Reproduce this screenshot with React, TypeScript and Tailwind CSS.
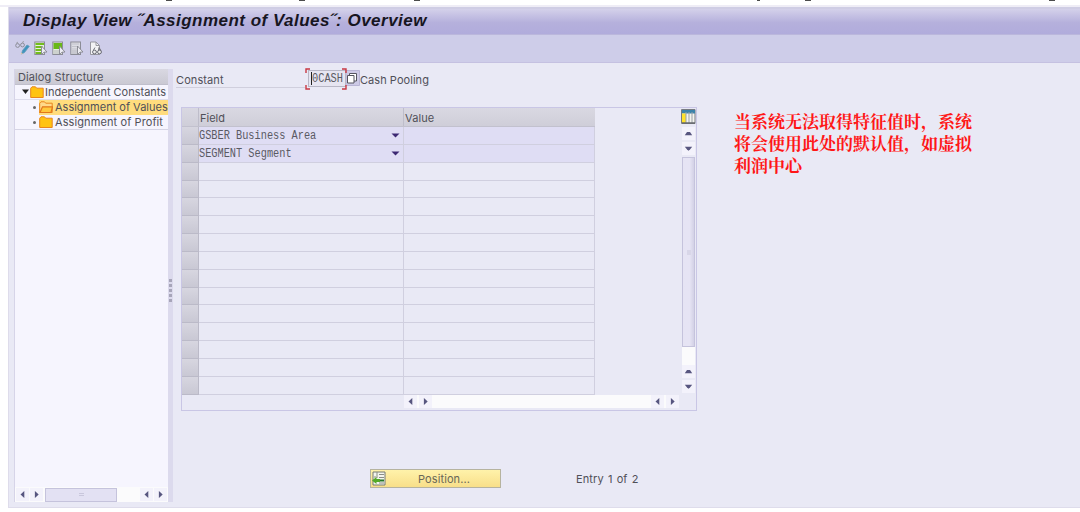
import React from "react";

type Dir = "up" | "down" | "left" | "right";
const arrows: Record<Dir, string> = {
  up: "M2.800 8.300h7.400L8 5H5z",
  down: "M2.800 4.700h7.400L8 7.500 6.500 8.700 5 7.500z",
  left: "M8.300 3v7L4.500 6.500z",
  right: "M4.900 3v7l3.800-3.500z",
};

function Arrow({ dir }: { dir: Dir }) {
  return (
    <span className="flex h-[13px] w-[13px] shrink-0 items-center justify-center bg-[#f3f2fb]">
      <svg width="13" height="13" viewBox="0 0 13 13"><path d={arrows[dir]} fill="#57567f" /></svg>
    </span>
  );
}

function Folder({ open = false }: { open?: boolean }) {
  return (
    <svg width="14" height="13" viewBox="0 0 14 13" className="shrink-0">
      <path d="M.7 2.200 2 .8h3.500l1.200 1.400h6.500v9.300H.7z" fill={open ? "#ffd98a" : "#ffc312"} stroke="#e8861d" />
      {open && <path d="M1 11.500 3.500 5.800h10l-1.500 5.700z" fill="#ffc83c" stroke="#e2771c" strokeWidth="1.200" />}
    </svg>
  );
}

function ListIcon({ kind }: { kind: "all" | "block" | "none" }) {
  return (
    <svg width="14" height="15" viewBox="0 0 14 15">
      <rect x=".8" y="1" width="9.700" height="12.500" fill={kind === "none" ? "#dddde4" : "#e7eedf"} stroke="#8b8c96" />
      {kind === "all" && <path d="M1.500 3h8.500M1.500 6h7M1.500 9h6M1.500 12h6" stroke="#72bd1e" strokeWidth="2" />}
      {kind === "block" && <path d="M1.500 2h8.500v6H1.500z" fill="#69b817" />}
      {kind !== "all" && <path d="M2 10h5M2 12h5" stroke="#b4b5bd" />}
      {kind === "none" && <path d="M2 3h7M2 5.500h6M2 8h5" stroke="#c2c3cb" />}
      <path d="m7.500 5 5.500 6-3 .2-2.500 2.300z" fill="#ececf3" stroke="#85868f" strokeWidth=".9" />
    </svg>
  );
}

function Toolbar() {
  return (
    <div className="flex h-[28px] items-center gap-[4px] border-b border-[#c5c1e1] bg-[#cecde9] pl-[6px]">
      <svg width="15" height="15" viewBox="0 0 15 15" fill="none">
        <circle cx="2.600" cy="4.500" r="1.900" stroke="#8c8e99" /><circle cx="7.500" cy="4" r="1.900" stroke="#8c8e99" />
        <path d="M1 2.500 3 1M7 1.500l2-1" stroke="#9b9ca5" />
        <path d="m6.500 13 1-3.500 4.500-5.500 2.300 1.300-4.800 6.200z" fill="#3f94bd" stroke="#5e9bb9" strokeWidth=".8" />
        <path d="m5.500 13.500 2.300-.8-1.300-1.200z" fill="#e9c6a0" />
      </svg>
      <ListIcon kind="all" />
      <ListIcon kind="block" />
      <ListIcon kind="none" />
      <svg width="15" height="15" viewBox="0 0 15 15" fill="none" className="ml-px">
        <path d="M1.500 13.500V1H7l3.500 3.500v9z" fill="#f3f3f5" stroke="#9797a0" />
        <path d="M7 1v3.500h3.500" stroke="#9797a0" />
        <circle cx="5.500" cy="11" r="1.900" fill="#eee" stroke="#666771" /><circle cx="10.500" cy="11" r="1.900" fill="#eee" stroke="#666771" />
        <path d="m4.500 9 1.500-2.500M9.500 9l.5-2.500 2 3" stroke="#777781" />
      </svg>
    </div>
  );
}

function DialogTree() {
  return (
    <aside className="flex h-[433px] w-[154px] shrink-0 flex-col overflow-hidden border-l border-[#d6d4e8] bg-[#f6f5fe] text-[11px]">
      <div className="h-[16px] border-b border-[#c0bfcc] bg-gradient-to-b from-[#d9d8e2] to-[#cac9d3] pl-[3px] leading-[17px] tracking-[0.1px]">Dialog Structure</div>
      <div className="flex h-[15px] items-center border-b border-[#dddcec] pl-[6px]">
        <svg width="9" height="8" viewBox="0 0 9 8" className="shrink-0"><path d="M1 1.500h7L4.500 6z" fill="#222" /></svg>
        <Folder />
        <span className="pl-px leading-[17px] whitespace-nowrap">Independent Constants</span>
      </div>
      <div className="flex h-[15px] items-center">
        <span className="mr-[3px] ml-[18px] h-[3px] w-[3px] shrink-0 rounded-full bg-[#666]" />
        <div className="flex h-[15px] w-[129px] items-center bg-[#ffdc7d] whitespace-nowrap"><Folder open /><span className="pl-[2px] leading-[15px]">Assignment of Values</span></div>
      </div>
      <div className="flex h-[15px] items-center border-b border-[#d6d5e5]">
        <span className="mr-[3px] ml-[18px] h-[3px] w-[3px] shrink-0 rounded-full bg-[#666]" />
        <Folder /><span className="pl-[2px] leading-[15px] tracking-[0.1px] whitespace-nowrap">Assignment of Profit</span>
      </div>
      <div className="flex-1" />
      <div className="flex h-[15px] items-center gap-px bg-[#fbfbfc] px-px">
        <Arrow dir="left" /><Arrow dir="right" />
        <div className="ml-px flex h-[14px] w-[72px] items-center justify-center border border-[#c5c3dc] bg-[#e3e1f3]"><span className="h-[3px] w-[5px] border-y border-[#c9c7dc]" /></div>
        <div className="flex-1" /><Arrow dir="left" /><Arrow dir="right" />
      </div>
    </aside>
  );
}

const rows = ["GSBER Business Area", "SEGMENT Segment", ...Array<string>(13).fill("")];

function FieldTable() {
  return (
    <section className="ml-[8px] flex h-[304px] w-[516px] border border-[#c9c6e5]">
      <div className="flex w-[413px] shrink-0 flex-col">
        <div className="flex h-[19px] shrink-0 border-b border-[#c2c1ce] bg-gradient-to-b from-[#d9d8e2] to-[#cfced9] text-[11px] leading-[20px]">
          <span className="w-[17px] border-r border-[#bebdca]" />
          <span className="w-[205px] border-r border-[#bebdca] pl-[1px]">Field</span>
          <span className="pl-[1px] tracking-[0.1px]">Value</span>
        </div>
        {rows.map((name, i) => (
          <div key={i} className={`flex h-[17.850px] shrink-0 ${name ? "bg-[#dfddf4]" : ""}`}>
            <span className="w-[17px] border-r border-b border-[#bbbac8] bg-gradient-to-b from-[#d7d6e0] to-[#c9c8d4]" />
            <span className="flex w-[205px] items-center justify-between border-r border-b border-[#d0cfdf] pr-[3px]">
              <span className="w-[180px] origin-left scale-x-[0.857] pt-px font-['Liberation_Mono',monospace] text-[12px] leading-[16px] whitespace-pre text-[#5a5a63]">{name}</span>
              {name && <svg width="9" height="7" viewBox="0 0 9 7"><path d="M.5 1.500h8L4.500 5.500z" fill="#3c2872" /></svg>}
            </span>
            <span className="flex-1 border-r border-b border-[#d0cfdf]" />
          </div>
        ))}
        <div className="ml-[222px] flex h-[13px] w-[275px] shrink-0 items-center gap-[2px] bg-[#fbfbfc]">
          <Arrow dir="left" /><Arrow dir="right" /><div className="flex-1" /><Arrow dir="left" /><Arrow dir="right" />
        </div>
      </div>
      <div className="ml-auto flex h-[285px] w-[15px] flex-col items-center">
        <svg width="15" height="17" viewBox="0 0 15 17"><path d="M.5 1.500h13.500v14H.5z" fill="#f4f4ee" stroke="#777b81" /><path d="M1 2h13v3.500H1z" fill="#3c83aa" /><path d="M1 5.500h4V15H1z" fill="#ffe22b" /><path d="M5 4v11M8 4v11M11 4v11" stroke="#999fa5" /><path d="M1 15h13" stroke="#66686c" strokeWidth="1.500" /></svg>
        <span className="mt-[2px] flex flex-col gap-[2px]"><Arrow dir="up" /><Arrow dir="down" /></span>
        <div className="mt-[2px] flex h-[190px] w-[13px] items-center justify-center border border-[#c5c3dc] bg-gradient-to-r from-[#e6e4f4] from-60% to-[#d3d1e6]"><span className="h-[5px] w-[4px] bg-[#d8d6e8]" /></div>
        <div className="w-[13px] flex-1 bg-[#fbfbfc]" />
        <span className="flex flex-col gap-[2px]"><Arrow dir="up" /><Arrow dir="down" /></span>
      </div>
    </section>
  );
}

function ConstantRow() {
  return (
    <div className="flex h-[22px] items-start pl-[3px] text-[11px]">
      <span className="h-[19px] w-[129px] border-b border-[#d0cfdd] leading-[22px] tracking-[0.1px]">Constant</span>
      <div className="relative h-[21px] w-[41px] pt-px pl-[3px]">
        <div className="flex h-[17px] w-[38px] items-center overflow-hidden border border-[#b8b7c6] bg-[#e6e5f1] pl-[2px]">
          <span className="h-[13px] w-px shrink-0 bg-[#222]" />
          <span className="origin-left scale-x-[0.86] pt-px font-['Liberation_Mono',monospace] text-[12px] leading-[15px] text-[#5a5a63]">0CASH</span>
        </div>
        <svg className="absolute top-[-1px] left-0" width="43" height="22" viewBox="0 0 43 22" fill="none"><path d="M1 5V1h4M37 1h4v4M41 17v4h-4M5 21H1v-4" stroke="#c83843" strokeWidth="1.400" /></svg>
      </div>
      <svg width="14" height="16" viewBox="0 0 14 16" className="mt-px"><path d="M0 .5h13.500v15H0z" fill="#cdcae6" stroke="#b9b5d5" /><path d="M3.500 6V3.500h7v7.500H8" fill="#fff" stroke="#55555f" /><path d="M1.500 5.500h6.500v7.500H1.500z" fill="#fff" stroke="#55555f" /></svg>
      <span className="leading-[22px] tracking-[0.05px]">Cash Pooling</span>
    </div>
  );
}

function PositionBar() {
  return (
    <div className="mt-[58px] flex items-center pl-[197px] text-[11px] text-[#6a6857]">
      <div className="flex h-[19px] w-[131px] items-center border border-[#b6b39f] bg-gradient-to-b from-[#fff2aa] to-[#f8df89] pl-[1px]">
        <svg width="14" height="15" viewBox="0 0 14 15"><path d="M1 1h12v13H1z" fill="#f4f5ed" stroke="#777a72" /><path d="M5 1v4M2 6h4M7 3.500h5M7 6.500h5M7 12h5" stroke="#8b8e86" /><path d="m0 9.500 4.500-3.500v2H8v3H4.500v2z" fill="#55aa29" /><path d="M8 9.500h4" stroke="#247527" strokeWidth="2" /></svg>
        <span className="pt-px pl-[32px] leading-[16px] tracking-[0.1px]">Position...</span>
      </div>
      <span className="ml-[75px] pt-px leading-[16px] tracking-[0.1px] text-[#505058] [word-spacing:1px]">Entry 1 of 2</span>
    </div>
  );
}

export default function App() {
  return (
    <div className="flex h-[512px] w-[1080px] flex-col overflow-hidden bg-white font-['Inter',sans-serif] text-[#505058]">
      <div className="flex h-[7px] shrink-0 items-start border-b-2 border-[#efedf6] bg-white pl-[166px]">
        <span className="h-px w-[6px] bg-[#4c4c4c]" />
        <span className="ml-[127px] h-px w-[6px] bg-[#4c4c4c]" />
        <span className="ml-[109px] h-px w-[6px] bg-[#4c4c4c]" />
        <span className="ml-[337px] h-px w-[3px] bg-[#4c4c4c]" />
        <span className="ml-[45px] h-px w-[6px] bg-[#4c4c4c]" />
        <span className="ml-[238px] h-px w-[6px] bg-[#4c4c4c]" />
      </div>
      <main className="ml-[8px] h-[501px] border-b border-l border-[#dedceb] bg-[#e9e9f5]">
        <header className="flex h-[28px] items-center border-t-2 border-b border-t-[#cfcde4] border-b-[#bbb7dc] bg-gradient-to-b from-[#d4d1ea] via-[#b5b0dc] via-55% to-[#b1acdc] pl-[14px]">
          <h1 className="pb-[2px] font-['Liberation_Sans',sans-serif] text-[17px] leading-none font-bold tracking-[0.48px] whitespace-nowrap text-[#17151f] italic">Display View ˝Assignment of Values˝: Overview</h1>
        </header>
        <Toolbar />
        <div className="flex h-[444px] pt-[6px] pl-[5px]">
          <DialogTree />
          <div className="flex h-[433px] w-[5px] shrink-0 flex-col items-center gap-[2px] bg-[#dcdaed] pt-[210px]">
            {[0, 1, 2, 3, 4].map(i => <span key={i} className="h-[3px] w-[3px] bg-[#a7a5b9]" />)}
          </div>
          <div className="flex w-[530px] flex-col">
            <ConstantRow />
            <div className="h-[16px]" />
            <FieldTable />
            <PositionBar />
          </div>
          <p className="mt-[41px] ml-[31px] w-[246px] font-['Noto_Serif_CJK_SC','Noto_Sans_CJK_SC',serif] text-[17px] leading-[22px] font-bold text-[#ff1717]">当系统无法取得特征值时，系统<br />将会使用此处的默认值，如虚拟<br />利润中心</p>
        </div>
      </main>
    </div>
  );
}
